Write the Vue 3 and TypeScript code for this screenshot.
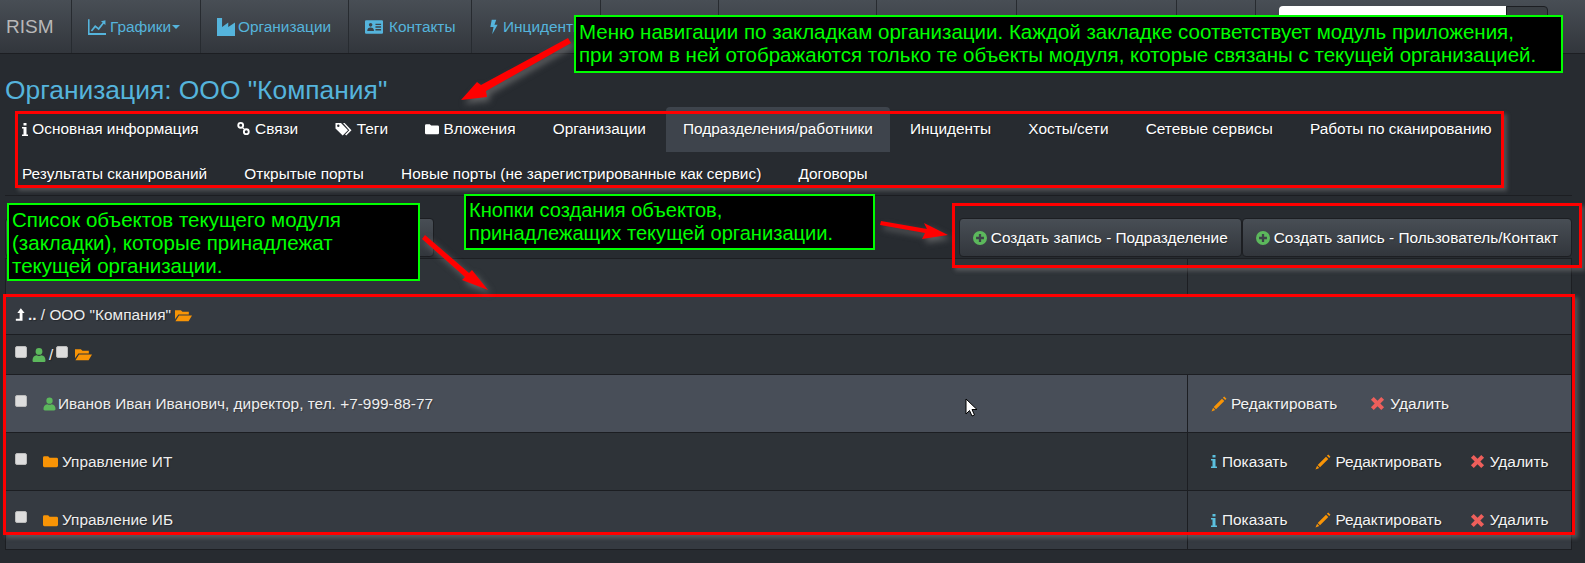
<script setup lang="ts">
const icons: Record<string, string> = {
  chart: 'M0 1h1.400v12.400H16V15H0z M2.500 11L6.300 6.200l3 2.400L13 4l-1.500-1.200L15.500 2v4.300L14 5.200 9.600 10.800l-3-2.400-3 3.700z',
  industry: 'M0 0h4.500v8L10 4v4l6-4v12H0z',
  card: 'M1 2h14a1 1 0 0 1 1 1v10a1 1 0 0 1-1 1H1a1 1 0 0 1-1-1V3a1 1 0 0 1 1-1z M5 4.500a1.600 1.600 0 1 0 0 3.200a1.600 1.600 0 1 0 0-3.200z M2 11.500c0-2 1.200-3 3-3s3 1 3 3z M9.300 5h5v1.200h-5z M9.300 7.400h5v1.200h-5z M9.300 9.800h5V11h-5z',
  bolt: 'M5 0h5L8 5.500h3.500L5.500 16l1.500-8H3.500z',
  info: 'M1.500 0h3v2.600h-3z M0 4h4.500v7.500H6V13H0v-1.500h1.500V5.500H0z',
  link: 'M5 1a3.600 3.600 0 1 0 0 7.200a3.600 3.600 0 1 0 0-7.200z M5 3a1.600 1.600 0 1 1 0 3.200a1.600 1.600 0 1 1 0-3.200z M11 7.800a3.600 3.600 0 1 0 0 7.200a3.600 3.600 0 1 0 0-7.200z M11 9.800a1.600 1.600 0 1 1 0 3.200a1.600 1.600 0 1 1 0-3.200z M6 7l3 3 1-1-3-3z',
  tags: 'M0 2h5.500l7 7.200L7.200 14.500 0 7.400z M2.800 3.500a1.200 1.200 0 1 0 0 2.400a1.200 1.200 0 1 0 0-2.400z M7.500 2h1.600l6.900 7.200-5.300 5.300-1.100-1.100 4.200-4.200z',
  folder: 'M0 4a1.500 1.500 0 0 1 1.500-1.500h4L7 4h7.500A1.500 1.500 0 0 1 16 5.500v7a1.500 1.500 0 0 1-1.500 1.500h-13A1.500 1.500 0 0 1 0 12.500z',
  open: 'M0 3h5.500L7 4.500h6V7H3.200L0 11.500z M3.800 8H16l-3.200 5.500H.4z',
  up: 'M8 0l4.500 5.500H10V15H2v-2.600h4.600V5.500H3.800z',
  user: 'M8 1a3.400 3.400 0 1 1 0 6.800a3.400 3.400 0 1 1 0-6.800z M1.500 13.500c0-3 1.500-5 4.200-5.200 1.400.8 3.200.8 4.600 0 2.700.2 4.200 2.200 4.200 5.200 0 1-.6 1.500-1.500 1.500H3c-.9 0-1.500-.5-1.500-1.500z',
  pencil: 'M13.200.5l2.300 2.300-1.300 1.300-2.300-2.300z M11 2.700l2.300 2.300-8.300 8.300-2.300-2.300z M2.100 11.700l2.200 2.200-3.800 1.600z',
  remove: 'M4 1l4 4 4-4 3 3-4 4 4 4-3 3-4-4-4 4-3-3 4-4-4-4z',
  plus: 'M8 0a8 8 0 1 0 0 16A8 8 0 1 0 8 0z M6.700 3.500h2.600v3.200h3.200v2.600H9.300v3.200H6.700V9.300H3.500V6.700h3.200z',
}

// у узких значков своя рамка, чтобы не было пустых полей
const viewBoxes: Record<string, string> = {
  info: '0 0 6 13',
  bolt: '2 0 11 16',
  user: '1 1 14 14',
}
const vb = (name: string) => viewBoxes[name] || '0 0 16 16'

type Tab = { label: string; icon?: string; active?: boolean }

const navItems = [
  { label: 'Графики', icon: 'chart', caret: true, width: 129 },
  { label: 'Организации', icon: 'industry', caret: false, width: 148 },
  { label: 'Контакты', icon: 'card', caret: false, width: 123 },
  { label: 'Инциденты', icon: 'bolt', caret: false, width: 129 },
  { label: '', icon: '', caret: false, width: 118 },
  { label: '', icon: '', caret: false, width: 158 },
  { label: '', icon: '', caret: false, width: 140 },
  { label: '', icon: '', caret: false, width: 160 },
  { label: '', icon: '', caret: false, width: 79 },
]

const tabs: Tab[] = [
  { label: 'Основная информация', icon: 'info' },
  { label: 'Связи', icon: 'link' },
  { label: 'Теги', icon: 'tags' },
  { label: 'Вложения', icon: 'folder' },
  { label: 'Организации' },
  { label: 'Подразделения/работники', active: true },
  { label: 'Инциденты' },
  { label: 'Хосты/сети' },
  { label: 'Сетевые сервисы' },
  { label: 'Работы по сканированию' },
  { label: 'Результаты сканирований' },
  { label: 'Открытые порты' },
  { label: 'Новые порты (не зарегистрированные как сервис)' },
  { label: 'Договоры' },
]

const rows = [
  { name: 'Иванов Иван Иванович, директор, тел. +7-999-88-77', icon: 'user', tone: 'hover', show: false },
  { name: 'Управление ИТ', icon: 'folder', tone: 'dark', show: true },
  { name: 'Управление ИБ', icon: 'folder', tone: 'light', show: true },
]
</script>

<template>
  <div class="page">
    <header class="navbar">
      <div class="brand">RISM</div>
      <div v-for="n in navItems" :key="n.width + n.label" class="nav-item" :style="{ width: n.width + 'px' }">
        <svg v-if="n.icon" :class="['ic', n.icon]" :viewBox="vb(n.icon)"><path :d="icons[n.icon]" fill-rule="evenodd" /></svg>
        <span>{{ n.label }}</span>
        <i v-if="n.caret" class="caret"></i>
      </div>
      <div class="search">
        <div class="search-input"></div>
        <div class="search-btn"></div>
      </div>
    </header>

    <main class="content">
      <h1 class="title">Организация: ООО "Компания"</h1>

      <ul class="tabs">
        <li v-for="t in tabs" :key="t.label" :class="['tab', { active: t.active }]">
          <svg v-if="t.icon" :class="['ic', t.icon]" :viewBox="vb(t.icon)"><path :d="icons[t.icon]" :fill-rule="t.icon == 'link' ? 'nonzero' : 'evenodd'" /></svg>
          {{ t.label }}
        </li>
      </ul>

      <div class="toolbar">
        <div class="btn hidden-btn"></div>
        <div class="btn-group">
          <div class="btn">
            <svg class="ic green" viewBox="0 0 16 16"><path :d="icons.plus" fill-rule="evenodd" /></svg>
            Создать запись - Подразделение
          </div>
          <div class="btn">
            <svg class="ic green" viewBox="0 0 16 16"><path :d="icons.plus" fill-rule="evenodd" /></svg>
            Создать запись - Пользователь/Контакт
          </div>
        </div>
      </div>

      <div class="table">
        <div class="row empty">
          <div class="cell-main"></div>
          <div class="cell-actions"></div>
        </div>
        <div class="row crumbs">
          <svg class="ic white" viewBox="1 0 12 16"><path :d="icons.up" /></svg>
          <b>..</b>&nbsp;/ ООО "Компания"
          <svg class="ic orange" viewBox="0 0 16 16"><path :d="icons.open" /></svg>
        </div>
        <div class="row select-all">
          <input type="checkbox" class="check" />
          <svg class="ic green" :viewBox="vb('user')"><path :d="icons.user" /></svg>
          <span class="slash">/</span>
          <input type="checkbox" class="check" />
          <svg class="ic orange wide" viewBox="0 0 16 16"><path :d="icons.open" /></svg>
        </div>
        <div v-for="r in rows" :key="r.name" :class="['row', 'item', r.tone]">
          <div class="cell-main">
            <input type="checkbox" class="check" />
            <svg :class="['ic', r.icon == 'user' ? 'green user' : 'orange']" :viewBox="vb(r.icon)"><path :d="icons[r.icon]" /></svg>
            <span :class="['name', r.icon]">{{ r.name }}</span>
          </div>
          <div class="cell-actions">
            <a v-if="r.show" class="act show"><svg class="ic blue info" :viewBox="vb('info')"><path :d="icons.info" /></svg>Показать</a>
            <a class="act edit"><svg class="ic orange" viewBox="0 0 16 16"><path :d="icons.pencil" /></svg>Редактировать</a>
            <a class="act del"><svg class="ic red" viewBox="0 0 16 16"><path :d="icons.remove" /></svg>Удалить</a>
          </div>
        </div>
      </div>
    </main>

    <!-- пометки поверх скриншота -->
    <div class="frame f-tabs"></div>
    <div class="frame f-buttons"></div>
    <div class="frame f-table"></div>

    <svg class="arrows" width="1585" height="563" viewBox="0 0 1585 563">
      <path d="M568 38l3 5-85 48 1 6-26 3 16-18 4 3z" fill="#f00" />
      <path d="M881 221l46 8-3-6 24 12-26 4 3-6-45-8z" fill="#f00" />
      <path d="M425 235l44 38 3-3 16 20-26-10 3-3-43-38z" fill="#f00" />
    </svg>

    <div class="note n-top">
      Меню навигации по закладкам организации. Каждой закладке соответствует модуль приложения,<br />
      при этом в ней отображаются только те объекты модуля, которые связаны с текущей организацией.
    </div>
    <div class="note n-buttons">
      Кнопки создания объектов,<br />
      принадлежащих текущей организации.
    </div>
    <div class="note n-list">
      Список объектов текущего модуля<br />
      (закладки), которые принадлежат<br />
      текущей организации.
    </div>

    <svg class="cursor" width="14" height="20" viewBox="0 0 14 20">
      <path d="M1 1v15l3.500-3.500 2.500 5.500 2.500-1-2.500-5.500h5z" fill="#fff" stroke="#000" />
    </svg>
  </div>
</template>

<style>
html, body {
  background: #272b30;
}
</style>

<style scoped>
.page {
  position: relative;
  width: 1585px;
  height: 563px;
  overflow: hidden;
  background: #272b30;
  color: #eee;
  font-family: "Liberation Sans", Arial, sans-serif;
  font-size: 15.400px;
}

.ic {
  width: 14px;
  height: 14px;
  fill: currentColor;
  flex: none;
  vertical-align: -2px;
}
.ic.info { width: 6px; height: 13px; }
.ic.link { width: 15px; height: 15px; }
.ic.tags { width: 17px; height: 16px; vertical-align: -3px; }
.ic.bolt { width: 10px; }
.ic.user { width: 13px; }
.white { color: #fff; }
.green { color: #5cb85c; }
.orange { color: #f89406; }
.blue { color: #5bc0de; }
.red { color: #ee5f5b; }

.navbar {
  display: flex;
  height: 54px;
  box-sizing: border-box;
  border-bottom: 1px solid #1c1e22;
  background: linear-gradient(#484e55, #32363c);
}
.brand {
  width: 72px;
  box-sizing: border-box;
  padding-left: 6px;
  line-height: 54px;
  font-size: 19px;
  color: #b8b8b8;
  border-right: 1px solid #272b30;
}
.nav-item {
  display: flex;
  align-items: center;
  gap: 4px;
  box-sizing: border-box;
  padding-left: 16px;
  color: #55b4dc;
  border-right: 1px solid #272b30;
  white-space: nowrap;
  overflow: hidden;
}
.nav-item .ic {
  width: 18px;
  height: 18px;
}
.nav-item .ic.bolt {
  width: 10px;
  margin-left: 1px;
}
.nav-item .ic.industry { margin-right: -1px; }
.nav-item .ic.card { margin-right: 2px; }
.caret {
  width: 0;
  height: 0;
  margin-left: -3px;
  border-top: 4px solid #55b4dc;
  border-left: 4px solid transparent;
  border-right: 4px solid transparent;
}
.search {
  display: flex;
  margin: 6px 0 0 23px;
  height: 34px;
}
.search-input {
  width: 227px;
  background: #fff;
  border-radius: 4px 0 0 4px;
}
.search-btn {
  width: 42px;
  background: #3a3f44;
  border: 1px solid #1c1e22;
  border-radius: 0 4px 4px 0;
  box-sizing: border-box;
}

.content {
  padding: 0 13px 0 5px;
}
.title {
  margin: 0;
  height: 53px;
  line-height: 72px;
  font-size: 26.400px;
  font-weight: 400;
  color: #55b4dc;
}

.tabs {
  display: flex;
  flex-wrap: wrap;
  align-content: flex-start;
  column-gap: 3.200px;
  height: 88px;
  margin: 0;
  padding: 0;
  list-style: none;
  border-bottom: 1px solid #1c1e22;
}
.tab {
  height: 45px;
  box-sizing: border-box;
  padding: 0 17px;
  line-height: 44px;
  color: #fff;
  white-space: nowrap;
  border-radius: 4px 4px 0 0;
  text-shadow: 1px 1px 1px rgba(0, 0, 0, 0.3);
}
.tab.active {
  background: #3e444c;
}

.toolbar {
  display: flex;
  justify-content: space-between;
  align-items: flex-start;
  height: 62px;
  padding-top: 22px;
}
.btn-group {
  display: flex;
}
.btn {
  display: flex;
  align-items: center;
  gap: 4px;
  height: 39px;
  box-sizing: border-box;
  padding: 0 13px;
  color: #fff;
  white-space: nowrap;
  border: 1px solid #1c1e22;
  border-radius: 4px;
  background: linear-gradient(#484e55, #32363c);
  text-shadow: 1px 1px 1px rgba(0, 0, 0, 0.3);
}
.hidden-btn {
  width: 429px;
}

.table {
  border: 1px solid #1c1e22;
  margin-top: -22px;
  box-sizing: border-box;
  background: #2e3338;
  text-shadow: 1px 1px 1px rgba(0, 0, 0, 0.3);
}
.row {
  display: flex;
  align-items: center;
  box-sizing: border-box;
  border-bottom: 1px solid #1c1e22;
}
.row:last-child { border-bottom: none; }
.cell-main {
  width: 1182px;
  height: 100%;
  display: flex;
  align-items: center;
  box-sizing: border-box;
  border-right: 1px solid #1c1e22;
  flex: none;
}
.cell-actions {
  flex: 1;
  height: 100%;
  display: flex;
  align-items: center;
  padding-left: 23px;
  gap: 28px;
}
.empty { height: 37px; }
.crumbs {
  height: 39px;
  padding-left: 9px;
  background: #353a41;
  white-space: pre;
}
.crumbs .ic { width: 10px; height: 14px; margin-right: 3px; }
.crumbs .orange { width: 17px; height: 17px; margin: 0; }
.select-all {
  height: 40px;
  padding-left: 9px;
}
.select-all .ic { margin-left: 5px; }
.select-all .wide { width: 17px; height: 17px; margin-left: 7px; }
.slash { margin: 0 3px 0 3px; }

.check {
  appearance: none;
  margin: -6px 0 0;
  width: 12px;
  height: 12px;
  flex: none;
  background: #ddd;
  border-radius: 2px;
  border: 1px solid #bbb;
  box-sizing: border-box;
}
.item { height: 58px; }
.item .cell-main { padding-left: 9px; }
.item .check { margin-right: 16px; }
.item .ic { width: 15px; height: 15px; }
.item .ic.user { width: 13px; height: 14px; }
.item .ic.info { width: 6px; height: 13px; }
.name.user { margin-left: 2px; }
.name.folder { margin-left: 4px; }
.hover { background: #484e58; }
.hover .del { margin-left: 5px; }
.dark { background: #2e3338; }
.light { background: #353a41; }

.act {
  display: inline-flex;
  align-items: center;
  gap: 5px;
  color: #f4f4f4;
  white-space: nowrap;
}
.edit { gap: 4px; }
.edit .ic { width: 16px; height: 16px; }
.show { gap: 5px; }

/* красные рамки и выноски */
.frame {
  position: absolute;
  box-sizing: border-box;
  border: 3px solid #f00;
  box-shadow: 3px 3px 4px rgba(130, 130, 130, 0.45);
  pointer-events: none;
}
.f-tabs { left: 15px; top: 111px; width: 1489px; height: 77px; }
.f-buttons { left: 952px; top: 203px; width: 630px; height: 65px; }
.f-table { left: 3px; top: 294px; width: 1572px; height: 241px; }

.arrows {
  position: absolute;
  left: 0;
  top: 0;
  filter: drop-shadow(3px 4px 3px rgba(130, 130, 130, 0.6));
}

.note {
  position: absolute;
  box-sizing: border-box;
  padding: 3px 3px;
  background: #000;
  color: #0f0;
  border: 2px solid #0f0;
  font-size: 20.500px;
  line-height: 23px;
  white-space: nowrap;
}
.n-top { left: 574px; top: 15px; width: 989px; height: 58px; }
.n-buttons { left: 464px; top: 194px; width: 411px; height: 56px; font-size: 20.100px; }
.n-list { left: 7px; top: 203px; width: 413px; height: 78px; }

.cursor {
  position: absolute;
  left: 965px;
  top: 398px;
}
</style>
